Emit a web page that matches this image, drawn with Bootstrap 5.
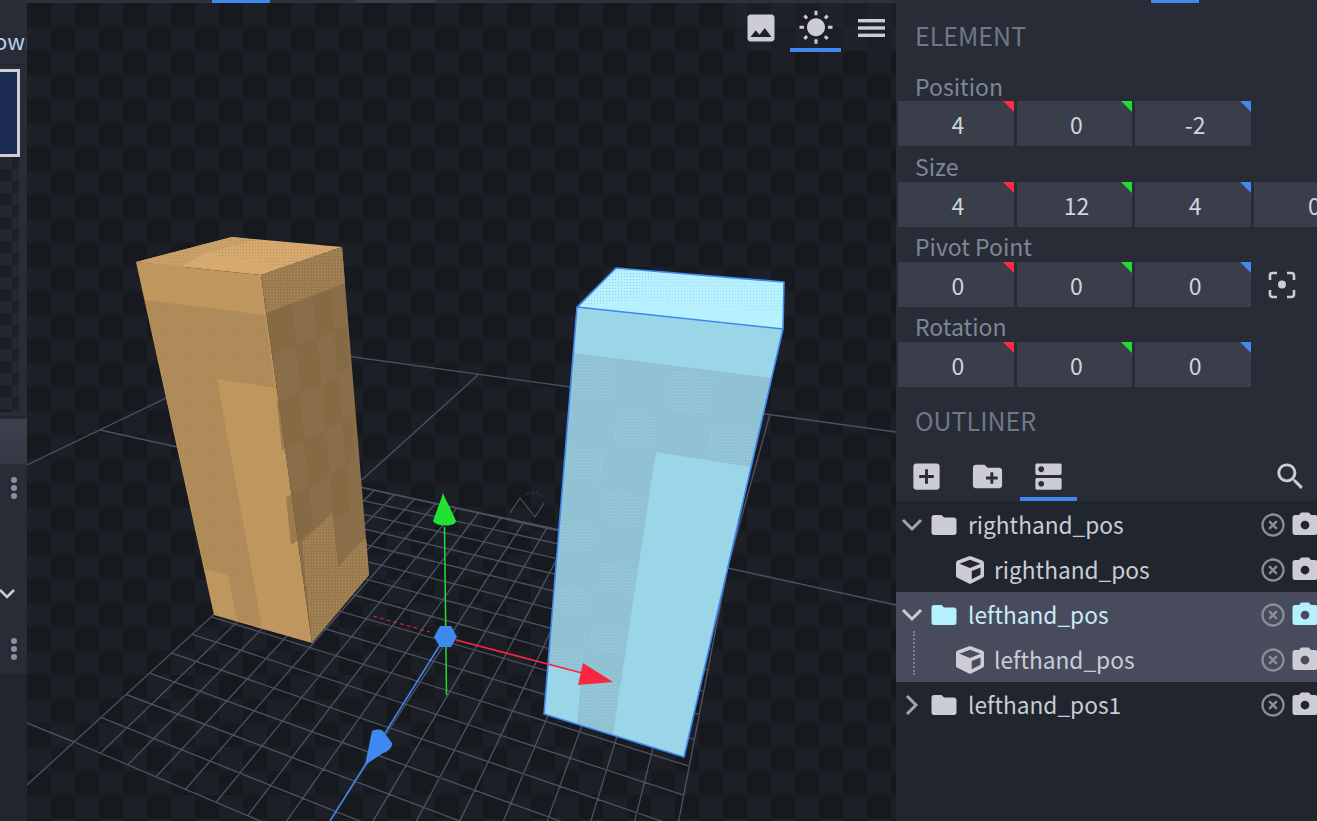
<!DOCTYPE html>
<html lang="en">
<head>
<meta charset="utf-8">
<title>Blockbench</title>
<link rel="stylesheet" href="https://cdn.jsdelivr.net/npm/bootstrap@5.3.0/dist/css/bootstrap.min.css">
<style>
html,body{height:100%;margin:0;background:#282c34;overflow:hidden;font-family:"Noto Sans CJK SC","Noto Sans",sans-serif}
.bb-app{width:1317px;height:821px;overflow:hidden}
.bb-left{width:27px;background:#282c36;overflow:hidden;flex:none}
.bb-view{width:869px;flex:none;background:#1a1d23}
.bb-right{width:421px;flex:none;background:#282c36;overflow:hidden}
.bb-strip{height:3px;background:#2d313c;flex:none}
.bb-tab{height:3px;background:#3e88ef;flex:none}
.bb-tab-grey{height:3px;background:#3a3e4b;flex:none}
.bb-own{height:64px;font-size:22px;color:#bdd0ea;margin-left:-6px;white-space:nowrap;line-height:80px}
.bb-line{height:1px;background:#1f2228;margin-right:2px}
.bb-thumb{width:20px;height:88px;margin-top:4px;border:3px solid #cfced8;border-left:0;background:#1c2b52}
.bb-cells{width:19px;height:255px;background:repeating-conic-gradient(#1c1f25 0 25%,#24272e 0 50%) 0 0/24px 24px}
.bb-active{height:45px;margin-top:2px;background:linear-gradient(#3d414e,#343843)}
.bb-dot{width:6px;height:6px;border-radius:50%;background:#8a90a0;margin:2px 0}
.bb-handle{width:6px;margin-left:11px;padding-top:11px}
.bb-chev{height:107px;padding-top:78px}
.bb-foot{background:#21252d;flex:1;margin-top:12px}
.bb-canvas{position:absolute;left:0;top:0;display:block}
.bb-tools{position:absolute;right:0;top:0;width:161px;height:48px;background:rgba(33,36,44,.55)}
.bb-toolbtn{width:51px;height:49px;display:flex;align-items:center;justify-content:center;flex:none}
.bb-toolbtn.on{border-bottom:4px solid #3e88ef;padding-top:4px;margin-left:3px}
.bb-toolbtn.menu{width:55px;justify-content:flex-start;padding-left:17px}
.bb-title{font-size:25px;color:#707786;padding-left:19px;line-height:30px}
.bb-head1{height:33px;padding-top:17px}
.bb-prow{height:80px}
.bb-prow.first{height:110px}
.bb-prow.second{height:81px}
.bb-plabel{height:35px;font-size:23px;line-height:30px;color:#7f8695;padding-left:19px;padding-top:4px;white-space:nowrap}
.bb-prow.first .bb-plabel{height:65px;padding-top:35px}
.bb-prow.second .bb-plabel{height:36px;padding-top:5px}
.bb-inputs{padding-left:2px;gap:3px;height:45px;align-items:center;width:500px}
.bb-num{position:relative;width:115.67px;height:45px;background:#3a3e4b;color:#cfd3dc;font-size:23px;text-align:center;line-height:46px;flex:none;padding-left:4px}
.bb-num::after{content:"";position:absolute;right:0;top:0;width:0;height:0;border-style:solid;border-width:0 11px 11px 0;border-color:transparent var(--corner,#ff2a43) transparent transparent}
.bb-num.r{--corner:#ff2a43}.bb-num.g{--corner:#21dd2d}.bb-num.b{--corner:#3e8aee}
.bb-num.cut{--corner:transparent;text-align:left;padding-left:54px}
.bb-focus{width:54px;margin-left:1px;display:flex;justify-content:center;align-items:center;flex:none}
.bb-outhead{height:69px;padding-top:18px}
.bb-bar{height:45px;padding-left:2px;position:relative;flex:none}
.bb-barbtn{width:57px;height:45px;padding-bottom:4px;display:flex;align-items:center;justify-content:center;flex:none}
.bb-barbtn+.bb-barbtn{margin-left:4px}
.bb-barbtn.on{border-bottom:4px solid #3e88ef;padding-bottom:0}
.bb-tree{background:#21252d;flex:1;color:#c9cdd6;font-size:22.7px;padding-top:1px}
.bb-node{height:45px;position:relative;align-items:center;white-space:nowrap}
.bb-node.sel{background:#474b5c}
.bb-node.sel .bb-name{color:#c9ecfa}
.bb-node.sel .bb-name.plain{color:#c9cdd6}
.bb-arrow{width:30px;flex:none;margin:0 2px 0 1px;display:flex;justify-content:center}
.bb-gap{width:60px;flex:none}
.bb-name{margin-left:9px;line-height:45px;padding-bottom:1px}
.bb-name.cu{margin-left:10px}
.bb-trail{position:absolute;left:363px;top:0;height:45px;gap:3px;align-items:center}
.bb-guide{position:absolute;left:17px;top:-6px;bottom:7px;border-left:2px dotted #7d8192}
.bb-ico{fill:#cdccd4;display:block;flex:none}
.bb-ico.hi{fill:#b5f0ff}
.bb-off{fill:#8a8e9b;flex:none}
.bb-stroke{fill:none;stroke:#cdccd4;stroke-width:2.6}
</style>
</head>
<body>
<div class="bb-app d-flex">
  <div class="bb-left d-flex flex-column">
    <div class="bb-own">own</div>
    <div class="bb-line"></div>
    <div class="bb-thumb"></div>
    <div class="bb-cells"></div>
    <div class="bb-line mt-1"></div>
    <div class="bb-active"></div>
    <div class="bb-handle"><div class="bb-dot"></div><div class="bb-dot"></div><div class="bb-dot"></div></div>
    <div class="bb-chev"><svg width="17" height="12" viewBox="0 0 17 12" style="margin-left:-1px"><path class="bb-stroke" d="M1 2l7 7 7-7"/></svg></div>
    <div class="bb-handle pt-4 mt-1"><div class="bb-dot"></div><div class="bb-dot"></div><div class="bb-dot"></div></div>
    <div class="bb-foot"></div>
  </div>

  <div class="d-flex flex-column">
    <div class="bb-strip d-flex" style="width:869px">
      <div style="width:185px"></div><div class="bb-tab" style="width:58px"></div>
      <div style="width:86px"></div><div class="bb-tab-grey" style="width:80px"></div>
    </div>
    <div class="bb-view position-relative flex-grow-1">
      <svg id="scene" class="bb-canvas" width="869" height="818" viewBox="27 3 869 818" xmlns="http://www.w3.org/2000/svg">
        <defs>
          <pattern id="chk" width="48" height="48" patternUnits="userSpaceOnUse" x="27" y="3">
            <rect width="48" height="48" fill="#16191e"/>
            <rect x="24" width="24" height="24" fill="#1c1f26"/>
            <rect y="24" width="24" height="24" fill="#1c1f26"/>
          </pattern>
          <pattern id="dOr" width="3" height="3" patternUnits="userSpaceOnUse"><rect width="1" height="1" fill="#c49a62"/></pattern>
          <pattern id="dOrT" width="3" height="3" patternUnits="userSpaceOnUse"><rect width="1" height="1" fill="#b8925c"/></pattern>
          <pattern id="dBl" width="3" height="3" patternUnits="userSpaceOnUse"><rect width="1" height="1" fill="#a9dcea"/></pattern>
          <pattern id="dBt" width="3" height="3" patternUnits="userSpaceOnUse"><rect width="1" height="1" fill="#8fd0e0"/></pattern>
        </defs>
        <rect x="27" y="3" width="869" height="818" fill="url(#chk)"/>
        <g id="grid" stroke="#4c5060" stroke-width="1.35" fill="none">
          <path d="M274 346L896 432M100 430L896 605M27 465L274 346M355 486L478 375M728 566L770 414M27 785L74 742M27 723L74 742"/>
        </g>
        <path d="M510 513L520 498 535 517 544 503" fill="none" stroke="#4b4e59" stroke-width="1.2"/>
        <path d="M526 494L537 492 543 497" fill="none" stroke="#3f424c" stroke-width=".8" stroke-dasharray="3 2"/>

        <!-- orange cube -->
        <polygon points="136,262 232,237 342,247 261,275" fill="#d6aa6e"/>
        <polygon points="136,262 232,237 256,240 205,253 180,267" fill="#c9a068"/>
        <polygon points="136,262 232,237 256,240 205,253 180,267" fill="url(#dOrT)"/>
        <polygon points="205,253 256,240 342,247 330,254 290,268" fill="url(#dOrT)"/>
        <polygon points="136,262 261,275 312,643 214,615" fill="#bf965e"/>
        <polygon points="145,300 265,315 275,388 217,379 262,627 237,620 228,575 205,569" fill="#ae8a58"/>
        <polygon points="145,300 265,315 275,388 217,379 262,627 237,620 228,575 205,569" fill="url(#dOr)" opacity=".35"/>
        <polygon points="261,275 342,247 369,575 312,643" fill="#8a6e49"/>
        <polygon points="261,275 342,247 345,283 267,313" fill="#9a7b50"/>
        <polygon points="261,275 342,247 345,283 267,313" fill="url(#dOr)" opacity=".7"/>
        <g fill="#81673f" opacity=".55">
          <polygon points="267,313 292,303 296,345 272,355"/>
          <polygon points="313,296 330,290 334,330 317,338"/>
          <polygon points="296,345 317,338 322,385 300,393"/>
          <polygon points="334,330 346,325 349,368 338,374"/>
          <polygon points="277,402 300,393 304,440 282,450"/>
          <polygon points="322,385 338,374 342,420 326,430"/>
          <polygon points="304,440 326,430 330,475 309,487"/>
          <polygon points="342,420 352,415 355,458 346,465"/>
          <polygon points="286,497 309,487 313,530 291,545"/>
          <polygon points="330,475 346,465 350,510 334,520"/>
        </g>
        <polygon points="302,542 332,513 338,567 353,550 366,538 369,575 312,643" fill="#9a7b50"/>
        <polygon points="302,542 332,513 338,567 353,550 366,538 369,575 312,643" fill="url(#dOr)" opacity=".7"/>

        <!-- light blue cube -->
        <polygon points="578,307 616,268 784,282 783,329" fill="#b7f1ff"/>
        <polygon points="578,307 616,268 655,273 633,300 578,307" fill="url(#dBt)"/>
        <polygon points="655,273 784,282 781,313 633,300" fill="url(#dBt)" opacity=".6"/>
        <polygon points="577,307 783,329 684,757 544,714" fill="#9bd5e8"/>
        <polygon points="574,353 772,378 751,467 656,452 613,734 577,723 582,673 548,665" fill="#90c2d4"/>
        <g fill="url(#dBl)" opacity=".55">
          <polygon points="574,358 616,365 612,402 571,396"/>
          <polygon points="670,370 716,378 710,415 666,408"/>
          <polygon points="617,410 658,416 654,448 613,442"/>
          <polygon points="711,425 756,430 750,467 707,460"/>
          <polygon points="567,446 605,452 601,482 563,476"/>
          <polygon points="606,492 646,497 641,528 603,522"/>
          <polygon points="560,520 598,527 594,552 557,546"/>
          <polygon points="599,562 635,568 632,596 597,590"/>
          <polygon points="555,586 591,592 588,614 552,609"/>
          <polygon points="592,624 626,630 623,655 590,650"/>
          <polygon points="552,648 585,654 583,668 550,664"/>
          <polygon points="582,680 620,686 617,723 580,718"/>
        </g>
        <path d="M577 307L616 268 784 282 783 329 684 757 544 714ZM577 307L783 329" fill="none" stroke="#3e88ef" stroke-width="1.6" stroke-linejoin="round"/>

        <!-- gizmo -->
        <path d="M373 616L430 632" stroke="#f8273f" stroke-width="1.2" stroke-dasharray="4 3" fill="none" opacity=".8"/>
        <path d="M444.500 527L446.500 695" stroke="#22e034" stroke-width="1.5" fill="none"/>
        <path d="M443 493C447 503 452 511 456 521 456 527 436 527 433 521 436 512 440 503 443 493Z" fill="#22e034"/>
        <path d="M440 645L330 821" stroke="#3e88ef" stroke-width="1.5" fill="none"/>
        <path d="M456 640L582 673" stroke="#f8273f" stroke-width="1.8" fill="none"/>
        <polygon points="583,663 613,682 578,685" fill="#f8273f"/>
        <path d="M365 765L372 731C376 729 381 729 383 731L392 743C393 747 388 752 383 753Z" fill="#3e88ef"/>
        <polygon points="440,626 451,626 457,637 451,647 440,647 434,637" fill="#3e88ef"/>
      </svg>
      <div class="bb-tools d-flex">
        <div class="bb-toolbtn" style="width:52px">
          <svg class="bb-ico" width="36" height="36" viewBox="0 0 24 24"><path d="M21 19V5c0-1.100-.9-2-2-2H5c-1.100 0-2 .9-2 2v14c0 1.100.9 2 2 2h14c1.100 0 2-.9 2-2zM8.500 13.500l2.500 3.010L14.500 12l4.500 6H5l3.500-4.500z" /></svg>
        </div>
        <div class="bb-toolbtn on">
          <svg class="bb-ico" width="36" height="36" viewBox="0 0 24 24"><path d="M6.760 4.840l-1.800-1.790-1.410 1.410 1.790 1.790 1.420-1.410zM4 10.500H1v2h3v-2zm9-9.950h-2V3.500h2V.55zm7.450 3.910l-1.410-1.410-1.790 1.790 1.410 1.410 1.790-1.790zm-3.210 13.700l1.790 1.800 1.410-1.410-1.800-1.790-1.400 1.400zM20 10.500v2h3v-2h-3zm-8-5c-3.310 0-6 2.690-6 6s2.690 6 6 6 6-2.690 6-6-2.690-6-6-6zm-1 16.950h2V19.500h-2v2.950zm-7.450-3.910l1.410 1.410 1.790-1.800-1.410-1.410-1.790 1.800z"/></svg>
        </div>
        <div class="bb-toolbtn menu">
          <svg class="bb-ico" width="27" height="18" viewBox="0 0 27 18"><rect y="0" width="27" height="3.400"/><rect y="7.300" width="27" height="3.400"/><rect y="14.600" width="27" height="3.400"/></svg>
        </div>
      </div>
    </div>
  </div>

  <div class="bb-right d-flex flex-column">
    <div class="bb-strip d-flex" style="background:transparent"><div style="width:255px"></div><div class="bb-tab" style="width:48px"></div></div>
    <div class="bb-title bb-head1">ELEMENT</div>

    <div class="bb-prow first">
      <div class="bb-plabel">Position</div>
      <div class="bb-inputs d-flex"><div class="bb-num r">4</div><div class="bb-num g">0</div><div class="bb-num b">-2</div></div>
    </div>
    <div class="bb-prow second">
      <div class="bb-plabel">Size</div>
      <div class="bb-inputs d-flex"><div class="bb-num r">4</div><div class="bb-num g">12</div><div class="bb-num b">4</div><div class="bb-num cut">0</div></div>
    </div>
    <div class="bb-prow">
      <div class="bb-plabel">Pivot Point</div>
      <div class="bb-inputs d-flex"><div class="bb-num r">0</div><div class="bb-num g">0</div><div class="bb-num b">0</div>
        <div class="bb-focus"><svg class="bb-ico" width="28" height="28" viewBox="0 0 28 28"><circle cx="14" cy="13.500" r="4"/><path d="M2 9V4.500A2.500 2.500 0 0 1 4.500 2H9M19 2h4.500A2.500 2.500 0 0 1 26 4.500V9M26 19v4.500a2.500 2.500 0 0 1-2.500 2.500H19M9 26H4.500A2.500 2.500 0 0 1 2 23.500V19" fill="none" stroke="#cdccd4" stroke-width="2.600"/></svg></div>
      </div>
    </div>
    <div class="bb-prow">
      <div class="bb-plabel">Rotation</div>
      <div class="bb-inputs d-flex"><div class="bb-num r">0</div><div class="bb-num g">0</div><div class="bb-num b">0</div></div>
    </div>

    <div class="bb-title bb-outhead">OUTLINER</div>
    <div class="bb-bar d-flex">
      <div class="bb-barbtn"><svg class="bb-ico" width="35" height="35" viewBox="0 0 24 24"><path d="M19 3H5c-1.110 0-2 .9-2 2v14c0 1.100.89 2 2 2h14c1.100 0 2-.9 2-2V5c0-1.100-.9-2-2-2zm-2 10h-4v4h-2v-4H7v-2h4V7h2v4h4v2z"/></svg></div>
      <div class="bb-barbtn"><svg class="bb-ico" width="35" height="35" viewBox="0 0 24 24"><path d="M20 6h-8l-2-2H4c-1.110 0-1.990.89-1.990 2L2 18c0 1.110.89 2 2 2h16c1.110 0 2-.89 2-2V8c0-1.110-.89-2-2-2zm-1 8h-3v3h-2v-3h-3v-2h3V9h2v3h3v2z"/></svg></div>
      <div class="bb-barbtn on"><svg class="bb-ico" width="35" height="35" viewBox="0 0 24 24"><path d="M20 13H4c-.55 0-1 .45-1 1v6c0 .55.45 1 1 1h16c.55 0 1-.45 1-1v-6c0-.55-.45-1-1-1zM7 19c-1.100 0-2-.9-2-2s.9-2 2-2 2 .9 2 2-.9 2-2 2zM20 3H4c-.55 0-1 .45-1 1v6c0 .55.45 1 1 1h16c.55 0 1-.45 1-1V4c0-.55-.45-1-1-1zM7 9c-1.100 0-2-.9-2-2s.9-2 2-2 2 .9 2 2-.9 2-2 2z"/></svg></div>
      <div class="bb-barbtn ms-auto" style="margin-right:-2px"><svg class="bb-ico" width="35" height="35" viewBox="0 0 24 24"><path d="M15.500 14h-.79l-.28-.27C15.410 12.590 16 11.110 16 9.500 16 5.910 13.090 3 9.500 3S3 5.910 3 9.500 5.910 16 9.500 16c1.610 0 3.090-.59 4.230-1.570l.27.28v.79l5 4.990L20.490 19l-4.990-5zm-6 0C7.010 14 5 11.990 5 9.500S7.010 5 9.500 5 14 7.010 14 9.500 11.990 14 9.500 14z"/></svg></div>
    </div>

    <div class="bb-tree">
      <svg width="0" height="0" class="position-absolute">
        <defs>
          <path id="pFolder" d="M10 4H4c-1.100 0-1.990.9-1.990 2L2 18c0 1.100.9 2 2 2h16c1.100 0 2-.9 2-2V8c0-1.100-.9-2-2-2h-8l-2-2z"/>
          <path id="pCube" d="M239.100 6.300l-208 78c-18.700 7-31.100 25-31.100 45v225.100c0 18.200 10.300 34.800 26.500 42.900l208 104c13.500 6.800 29.400 6.800 42.900 0l208-104c16.300-8.100 26.500-24.800 26.500-42.900V129.300c0-20-12.400-37.900-31.100-44.900l-208-78C262 2.200 250 2.200 239.100 6.300zM256 68.400l192 72v1.100l-192 78-192-78v-1.100l192-72zm32 356V275.500l160-65v133.900l-160 80z"/>
          <path id="pOff" d="M14.590 8L12 10.590 9.410 8 8 9.410 10.590 12 8 14.590 9.410 16 12 13.410 14.590 16 16 14.590 13.410 12 16 9.410 14.590 8zM12 2C6.470 2 2 6.470 2 12s4.470 10 10 10 10-4.470 10-10S17.530 2 12 2zm0 18c-4.410 0-8-3.590-8-8s3.590-8 8-8 8 3.590 8 8-3.590 8-8 8z"/>
          <path id="pCam" fill-rule="evenodd" d="M9 2L7.170 4H4c-1.100 0-2 .9-2 2v12c0 1.100.9 2 2 2h16c1.100 0 2-.9 2-2V6c0-1.100-.9-2-2-2h-3.170L15 2H9zm3 6.500a3.500 3.500 0 1 1 0 7 3.500 3.500 0 0 1 0-7z"/>
        </defs>
      </svg>

      <div class="bb-node d-flex">
        <div class="bb-arrow"><svg width="22" height="14" viewBox="0 0 22 14"><path d="M2 2l9 9 9-9" fill="none" stroke="#a2a5b0" stroke-width="3"/></svg></div>
        <svg class="bb-ico" width="30" height="30" viewBox="0 0 24 24"><use href="#pFolder"/></svg>
        <span class="bb-name">righthand_pos</span>
        <div class="bb-trail d-flex"><svg class="bb-off" width="28" height="28" viewBox="0 0 24 24"><use href="#pOff"/></svg><svg class="bb-ico" width="30" height="30" viewBox="0 0 24 24"><use href="#pCam"/></svg></div>
      </div>
      <div class="bb-node d-flex">
        <div class="bb-gap"></div>
        <svg class="bb-ico" width="28" height="28" viewBox="0 0 512 512"><use href="#pCube"/></svg>
        <span class="bb-name cu">righthand_pos</span>
        <div class="bb-trail d-flex"><svg class="bb-off" width="28" height="28" viewBox="0 0 24 24"><use href="#pOff"/></svg><svg class="bb-ico" width="30" height="30" viewBox="0 0 24 24"><use href="#pCam"/></svg></div>
      </div>
      <div class="bb-node sel d-flex">
        <div class="bb-arrow"><svg width="22" height="14" viewBox="0 0 22 14"><path d="M2 2l9 9 9-9" fill="none" stroke="#cdccd4" stroke-width="3"/></svg></div>
        <svg class="bb-ico hi" width="30" height="30" viewBox="0 0 24 24"><use href="#pFolder"/></svg>
        <span class="bb-name">lefthand_pos</span>
        <div class="bb-trail d-flex"><svg class="bb-off" width="28" height="28" viewBox="0 0 24 24"><use href="#pOff"/></svg><svg class="bb-ico hi" width="30" height="30" viewBox="0 0 24 24"><use href="#pCam"/></svg></div>
      </div>
      <div class="bb-node sel d-flex">
        <div class="bb-guide"></div>
        <div class="bb-gap"></div>
        <svg class="bb-ico" width="28" height="28" viewBox="0 0 512 512"><use href="#pCube"/></svg>
        <span class="bb-name cu plain">lefthand_pos</span>
        <div class="bb-trail d-flex"><svg class="bb-off" width="28" height="28" viewBox="0 0 24 24"><use href="#pOff"/></svg><svg class="bb-ico" width="30" height="30" viewBox="0 0 24 24"><use href="#pCam"/></svg></div>
      </div>
      <div class="bb-node d-flex">
        <div class="bb-arrow"><svg width="14" height="22" viewBox="0 0 14 22"><path d="M2 2l9 9-9 9" fill="none" stroke="#a2a5b0" stroke-width="3"/></svg></div>
        <svg class="bb-ico" width="30" height="30" viewBox="0 0 24 24"><use href="#pFolder"/></svg>
        <span class="bb-name">lefthand_pos1</span>
        <div class="bb-trail d-flex"><svg class="bb-off" width="28" height="28" viewBox="0 0 24 24"><use href="#pOff"/></svg><svg class="bb-ico" width="30" height="30" viewBox="0 0 24 24"><use href="#pCam"/></svg></div>
      </div>
    </div>
  </div>
</div>
<script src="https://cdn.jsdelivr.net/npm/bootstrap@5.3.0/dist/js/bootstrap.bundle.min.js"></script>
<script>
(function(){
  var x0=355,y0=486,x1=728,y1=566,x2=647,y2=985,x3=74,y3=742;
  var dx1=x1-x2,dx2=x3-x2,sx=x0-x1+x2-x3,dy1=y1-y2,dy2=y3-y2,sy=y0-y1+y2-y3;
  var d=dx1*dy2-dx2*dy1,g=(sx*dy2-dx2*sy)/d,h=(dx1*sy-sx*dy1)/d;
  var a=x1-x0+g*x1,b=x3-x0+h*x3,c=y1-y0+g*y1,e=y3-y0+h*y3;
  function P(u,v){u/=16;v/=16;var w=g*u+h*v+1;return ((a*u+b*v+x0)/w).toFixed(1)+' '+((c*u+e*v+y0)/w).toFixed(1);}
  var s='';
  for(var i=0;i<=16;i++){s+='M'+P(i,0)+'L'+P(i,16)+'M'+P(0,i)+'L'+P(16,i);}
  var p=document.createElementNS('http://www.w3.org/2000/svg','path');
  p.setAttribute('d',s);
  document.getElementById('grid').appendChild(p);
})();
</script>
</body>
</html>
